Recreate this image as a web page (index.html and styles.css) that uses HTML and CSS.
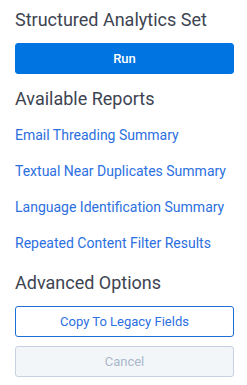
FILE: index.html
```html
<!DOCTYPE html>
<html lang="en">
<head>
    <meta charset="UTF-8">
    <meta name="viewport" content="width=device-width, initial-scale=1.0">
    <title>Structured Analytics Set</title>
    <link rel="stylesheet" href="styles.css">
</head>
<body>

    <div class="panel">
        <h2 class="section-title first">Structured Analytics Set</h2>
        <button class="btn btn-primary run-btn" type="button">Run</button>

        <h2 class="section-title reports-title">Available Reports</h2>
        <div class="report-list">
            <a href="#" class="report-link">Email Threading Summary</a>
            <a href="#" class="report-link">Textual Near Duplicates Summary</a>
            <a href="#" class="report-link">Language Identification Summary</a>
            <a href="#" class="report-link">Repeated Content Filter Results</a>
        </div>

        <h2 class="section-title advanced-title">Advanced Options</h2>
        <div class="button-stack">
            <button class="btn btn-outline" type="button">Copy To Legacy Fields</button>
            <button class="btn btn-disabled" type="button" disabled>Cancel</button>
        </div>
    </div>

</body>
</html>
```

FILE: styles.css
```css
body {
    font-family: Roboto, "Liberation Sans", Arial, sans-serif;
    background-color: #ffffff;
    margin: 0;
    padding: 0;
    color: #3d4451;
}
.panel {
    padding: 10px 13px 0 15px;
}
.section-title {
    margin: 0;
    font-size: 18px;
    line-height: 20px;
    font-weight: 400;
    color: #3d4451;
}
.reports-title {
    margin-top: 15px;
}
.advanced-title {
    margin-top: 21px;
}
.btn {
    display: block;
    width: 100%;
    height: 31px;
    border-radius: 3px;
    font-family: inherit;
    font-size: 13px;
    cursor: pointer;
    box-sizing: border-box;
}
.btn-primary {
    background-color: #0074e0;
    border: 1px solid #0074e0;
    color: #ffffff;
    font-weight: 500;
}
.run-btn {
    margin-top: 13px;
}
.btn-outline {
    background-color: #ffffff;
    border: 1px solid #1d6fd8;
    color: #2c6fe0;
}
.btn-disabled {
    background-color: #f3f6f9;
    border: 1px solid #c6d2df;
    color: #a9b8ca;
    cursor: default;
}
.report-list {
    display: flex;
    flex-direction: column;
    align-items: flex-start;
    gap: 19px;
    margin-top: 18px;
}
.report-link {
    font-size: 14px;
    line-height: 17px;
    color: #2c6fe0;
    text-decoration: none;
}
.report-link:hover {
    text-decoration: underline;
}
.button-stack {
    display: flex;
    flex-direction: column;
    gap: 9px;
    margin-top: 13px;
}
```
